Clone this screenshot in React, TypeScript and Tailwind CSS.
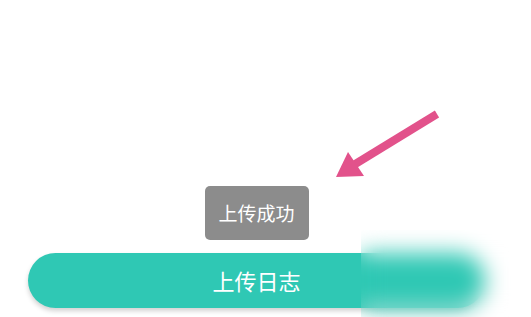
export default function App() {
  return (
    <div
      className="relative h-[317px] w-[531px] overflow-hidden bg-white"
      style={{ fontFamily: '"Noto Sans CJK SC", "Noto Sans", sans-serif' }}
    >
      {/* pointer arrow */}
      <svg
        className="absolute left-[330px] top-[104px]"
        width="116"
        height="80"
        viewBox="330 104 116 80"
      >
        <line x1="437" y1="114" x2="352" y2="166" stroke="#e2528b" strokeWidth="8" />
        <polygon points="336,177 348,152 364,176" fill="#e2528b" />
      </svg>

      <div className="flex flex-col items-center pl-[28px] pr-[46px] pt-[186px]">
        <div className="flex h-[54px] w-[104px] items-center justify-center rounded-[5px] bg-[#8c8c8c] text-[19px] text-white">
          上传成功
        </div>
        <button className="mt-[13px] flex h-[55px] w-full items-center justify-center rounded-full bg-[#2fc8b4] text-[22px] text-white shadow-[0_3px_5px_rgba(0,0,0,0.18)]">
          上传日志
        </button>
      </div>

      {/* blurred area */}
      <div className="absolute bottom-0 left-[361px] right-0 top-[230px] backdrop-blur-[11px]" />
    </div>
  );
}
